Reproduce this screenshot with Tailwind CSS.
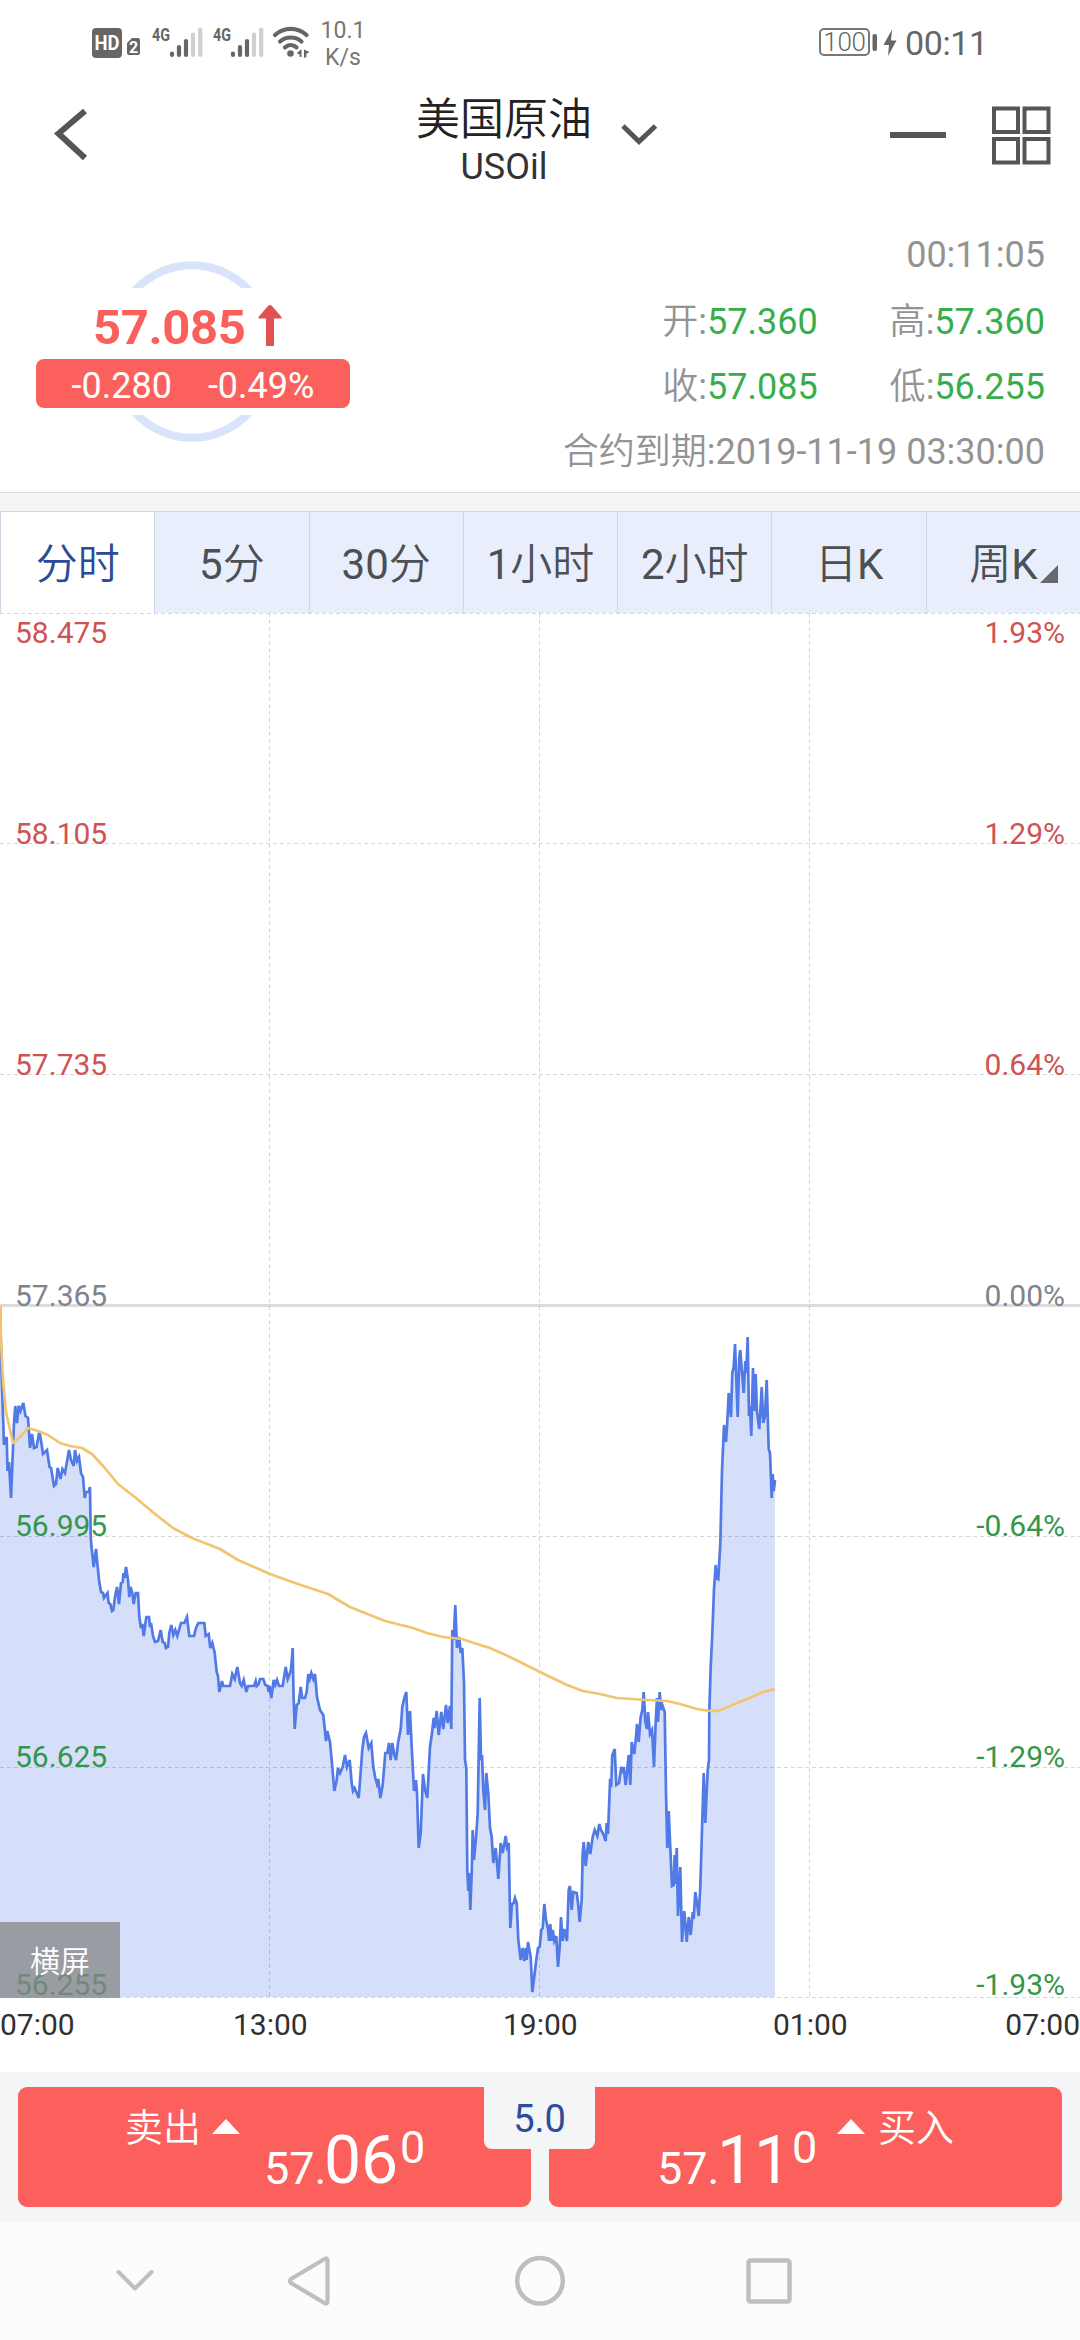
<!DOCTYPE html>
<html lang="zh-CN">
<head>
<meta charset="utf-8">
<title>美国原油 USOil</title>
<script src="https://cdn.jsdelivr.net/npm/@tailwindcss/browser@4"></script>
</head>
<body class="w-[1080px] h-[2340px] overflow-hidden bg-white font-[Roboto,'Noto_Sans_CJK_SC',sans-serif] flex flex-col">

<!-- Status bar -->
<header class="h-[84px] shrink-0 flex justify-between pl-[92px] pr-[94px] text-[#666]">
  <div class="flex">
    <svg class="w-[220px] h-[84px]" viewBox="92 0 220 84" fill="#666">
      <rect x="92" y="28" width="30" height="30" rx="4"/>
      <text x="107" y="50" text-anchor="middle" font-size="19.5" font-weight="700" fill="#fff" textLength="25" lengthAdjust="spacingAndGlyphs">HD</text>
      <path d="M132 38h6a2 2 0 0 1 2 2v13a2 2 0 0 1-2 2h-9a2 2 0 0 1-2-2V43z"/>
      <text x="133.5" y="53" text-anchor="middle" font-size="16" font-weight="700" fill="#fff">2</text>
      <g id="sig">
        <text x="152" y="40.500" font-size="19" font-weight="700" textLength="18" lengthAdjust="spacingAndGlyphs">4G</text>
        <g stroke-width="4.2" stroke-linecap="round" stroke="#666">
          <path d="M172 53.500v1.500M179 47v8M186 41v14"/>
          <path stroke="#d0d0d0" d="M193 34.500v20.500M200.200 29.500v25.500"/>
        </g>
      </g>
      <use href="#sig" x="61"/>
      <g fill="none" stroke="#666" stroke-width="4.200" stroke-linecap="round">
        <path d="M275 35a23.500 23.500 0 0 1 31.500 0M280 41.500a16.500 16.500 0 0 1 21.500 0M285 47.300a9 9 0 0 1 11.500 0"/>
      </g>
      <circle cx="290.500" cy="53.500" r="3.300"/>
      <path d="M301.500 49v8h-1.800v-2.500l-3-1.300zM304 49.500l5.500 2.500-3.200 2v3.500H304z"/>
    </svg>
    <div class="w-[62px] text-center text-[23px] leading-[27px] pt-[17px] text-[#777]"><div>10.1</div><div>K/s</div></div>
  </div>
  <div class="flex items-center">
    <div class="w-[51px] h-[28px] border-2 border-[#777] rounded-[5px] text-[26px] leading-[25px] font-[350] text-center tracking-[-0.3px]">100</div>
    <svg class="w-[34px] h-[30px]" viewBox="870 27 34 30" fill="#666"><rect x="872.500" y="34" width="4.500" height="17" rx="2"/><path d="M892 29.500l-8.500 15.500h5.500l-1 11 8.500-15.500h-5.500z"/></svg>
    <div class="text-[34px] leading-[40px] pt-[2px] tracking-[-0.4px] w-[82px] pl-[1px]">00:11</div>
  </div>
</header>

<!-- Title bar -->
<nav class="h-[126px] shrink-0 flex text-[#222]">
  <svg class="w-[380px] h-[100px]" viewBox="0 84 380 100"><path d="M85 112L58.500 134.500 85 159" fill="none" stroke="#555" stroke-width="6" transform="translate(0 -1)"/></svg>
  <div class="w-[248px] text-center flex flex-col items-center">
    <div class="text-[44px] leading-[72px] h-[62px] font-[350]">美国原油</div>
    <div class="text-[36px] leading-[42px] text-[#333]">USOil</div>
  </div>
  <svg class="w-[452px] h-[100px]" viewBox="628 84 452 100" overflow="visible" fill="none" stroke="#555">
    <path d="M623 126l16 15.500L655.500 126" stroke-width="5"/>
    <path d="M890 135h56" stroke-width="6"/>
    <path d="M994 108.500h24v23.500h-24zM1024.500 108.500h24v23.500h-24zM994 139h24v23.500h-24zM1024.500 139h24v23.500h-24z" stroke-width="4"/>
  </svg>
</nav>

<!-- Quote summary -->
<section class="h-[283px] shrink-0 flex justify-between border-b border-[#d9dcd6]">
  <div class="relative w-[350px] pl-9 pt-[78px]">
    <svg class="absolute left-[92px] top-[41px] w-[200px] h-[200px]" viewBox="92 251 200 200" fill="none" stroke="#d9e3fb" stroke-width="8">
      <clipPath id="caps"><path d="M92 251h200v37H92zM92 415h200v36H92z"/></clipPath>
      <ellipse cx="192" cy="351.500" rx="81" ry="86.300" clip-path="url(#caps)"/>
    </svg>
    <div class="relative h-[71px] flex items-center pl-[57px] text-[#f9605c]">
      <span class="text-[49px] leading-[71px] font-bold pt-[7px] w-[154px] tracking-[-0.4px]">57.085</span>
      <svg class="w-[24px] h-[41px] ml-[11px] mt-1" viewBox="0 0 24 41" fill="#e05252"><path d="M12 0q1 0 2 1l9.500 11q.8 1.500-1 1.500H16V41H8V13.500H1.500q-1.800 0-1-1.500L10 1q1-1 2-1z"/></svg>
    </div>
    <div class="relative h-[49px] rounded-lg bg-[#fc605c] text-white text-[36px] leading-[54px] flex justify-center gap-9"><span>-0.280</span><span>-0.49%</span></div>
  </div>
  <div class="pr-[35px] pt-[23px] text-right text-[36px] leading-[44px] text-[#939393] font-[350]">
    <div class="h-[67px] font-normal">00:11:05</div>
    <div class="h-[65px] flex justify-end gap-[72px]"><div>开<b class="font-normal">:</b><b class="font-normal text-[#38ad4c]">57.360</b></div><div>高<b class="font-normal">:</b><b class="font-normal text-[#38ad4c]">57.360</b></div></div>
    <div class="h-[65px] flex justify-end gap-[72px]"><div>收<b class="font-normal">:</b><b class="font-normal text-[#38ad4c]">57.085</b></div><div>低<b class="font-normal">:</b><b class="font-normal text-[#38ad4c]">56.255</b></div></div>
    <div>合约到期<span class="font-normal">:2019-11-19 03:30:00</span></div>
  </div>
</section>
<div class="h-[18px] shrink-0 bg-[#f3f5f6]"></div>

<!-- Period tabs -->
<div class="h-[102px] shrink-0 grid grid-cols-7 border-t border-[#cfd9e6] bg-[#e9eefc] text-[42px] leading-[106px] text-center text-[#4c4f54]">
  <div class="bg-white text-[#2a4b98] border-l border-[#cfd9e6] font-[350] h-[101px]">分时</div>
  <div class="border-l border-[#cfd9e6] h-[101px]">5<span class="font-[350]">分</span></div>
  <div class="border-l border-[#cfd9e6] h-[101px]">30<span class="font-[350]">分</span></div>
  <div class="border-l border-[#cfd9e6] h-[101px]">1<span class="font-[350]">小时</span></div>
  <div class="border-l border-[#cfd9e6] h-[101px]">2<span class="font-[350]">小时</span></div>
  <div class="border-l border-[#cfd9e6] h-[101px]"><span class="font-[350]">日</span>K</div>
  <div class="border-l border-[#cfd9e6] h-[101px] flex justify-center pl-[20px]"><span class="font-[350]">周</span>K<svg class="w-[18px] h-[18px] mt-[53px] ml-[2px]" viewBox="0 0 18 18" fill="#66686c"><path d="M18 0v18H0z"/></svg></div>
</div>

<!-- Intraday chart -->
<section class="relative h-[1385px] shrink-0">
  <svg class="w-[1080px] h-[1385px]" viewBox="0 613 1080 1385">
    <path fill="none" stroke="#dcdcdf" stroke-width="3" d="M0 1305.500H1080"/>
    <path id="area" fill="#d6dffa"/>
    <g fill="none" stroke="#000" stroke-opacity=".16" stroke-width="1" stroke-dasharray="4 3">
      <path d="M0 613.500H1080M0 843.500H1080M0 1074.500H1080M0 1536.500H1080M0 1767.500H1080M0 1997.500H1080M269.500 613V1997M539.500 613V1997M809.500 613V1997"/>
    </g>
    <path id="line" fill="none" stroke="#527ae6" stroke-width="2.700"/>
    <path id="avg" fill="none" stroke="#f3c470" stroke-width="2.700" stroke-linejoin="round"/>
    <g font-size="30">
      <g fill="#cf5353"><text x="15" y="643">58.475</text><text x="15" y="844">58.105</text><text x="15" y="1075">57.735</text></g>
      <text x="15" y="1306" fill="#80838c">57.365</text>
      <g fill="#35964b"><text x="15" y="1536">56.995</text><text x="15" y="1767">56.625</text><text x="15" y="1995">56.255</text></g>
      <g text-anchor="end">
        <g fill="#cf5353"><text x="1065" y="643">1.93%</text><text x="1065" y="844">1.29%</text><text x="1065" y="1075">0.64%</text></g>
        <text x="1065" y="1306" fill="#80838c">0.00%</text>
        <g fill="#35964b"><text x="1065" y="1536">-0.64%</text><text x="1065" y="1767">-1.29%</text><text x="1065" y="1995">-1.93%</text></g>
      </g>
    </g>
  </svg>
  <div class="absolute left-0 bottom-0 w-[120px] h-[76px] bg-[#858585]/75 text-white text-[30px] leading-[80px] text-center font-[350]">横屏</div>
</section>
<div class="relative h-[74px] shrink-0 grid grid-cols-4 text-[30px] leading-[54px] text-[#303030]">
  <span>07:00</span><span class="-ml-[37px]">13:00</span><span class="-ml-[37px]">19:00</span><span class="-ml-[37px] flex justify-between"><span>01:00</span><span>07:00</span></span>
</div>

<!-- Trade bar -->
<section class="relative h-[150px] shrink-0 bg-[#f4f5f6] px-[18px] pt-[15px] flex gap-[18px] text-white">
  <div class="w-[513px] h-[120px] rounded-[9px] bg-[#fc605c] flex pl-[107px]">
    <span class="text-[38px] leading-[44px] pt-[19px] font-[350] w-[87px]">卖出</span>
    <svg class="w-[28px] h-[15px] mt-[32px] mr-[24px]" viewBox="0 0 28 15" fill="#fff"><path d="M14 0l14 15H0z"/></svg>
    <span class="text-[45px] leading-[53px] pt-[55px] w-[60px]">57.</span>
    <span class="text-[66px] leading-[76px] pt-[36px] w-[76px]">06</span>
    <span class="text-[45px] leading-[53px] pt-[34px]">0</span>
  </div>
  <div class="w-[513px] h-[120px] rounded-[9px] bg-[#fc605c] flex pl-[108px]">
    <span class="text-[45px] leading-[53px] pt-[55px] w-[60px]">57.</span>
    <span class="text-[66px] leading-[76px] pt-[36px] w-[75px]">11</span>
    <span class="text-[45px] leading-[53px] pt-[34px] w-[45px]">0</span>
    <svg class="w-[28px] h-[15px] mt-[32px] mr-[13px]" viewBox="0 0 28 15" fill="#fff"><path d="M14 0l14 15H0z"/></svg>
    <span class="text-[38px] leading-[44px] pt-[19px] font-[350]">买入</span>
  </div>
  <div class="absolute left-[484px] top-[15px] w-[111px] h-[62px] rounded-b-lg bg-[#f4f5f6] text-[#2f4c9a] text-[38px] leading-[64px] text-center">5.0</div>
</section>

<!-- System navigation -->
<footer class="h-[118px] shrink-0 bg-[#fcfcfc]">
  <svg class="w-[1080px] h-[118px]" viewBox="0 2222 1080 118" fill="none" stroke="#bfbfbf" stroke-width="4.500" stroke-linejoin="round" stroke-linecap="round">
    <path d="M118.500 2272L135 2288.500 151.500 2272" stroke-width="4"/>
    <path d="M327.500 2260.500v41q0 3-3 1.500L291 2283q-2-2 0-4L324.500 2259q3-1.500 3 1.500z" stroke-width="4.200"/>
    <circle cx="540" cy="2280.800" r="22.800"/>
    <rect x="748.500" y="2260.500" width="41" height="41" rx="2"/>
  </svg>
</footer>

<script>
const price = `0,1306 1.7,1377 4,1445 5,1437 6,1443 6.700,1437 7.500,1471 9,1462 11,1498 12,1473 14,1423 15.300,1406 17,1423 18.700,1406 20.500,1411 23.300,1403 25.500,1416 28,1418 30,1448 32,1434 34,1448 36.500,1447 39.500,1431 43,1454 47,1450 49.500,1467 51,1468 54,1486 56,1484 57.700,1468 60.500,1479 62.500,1469 65,1473 69,1450 71,1460 73.700,1466 75,1450 77,1461 79,1457 81,1473 83,1477 84.700,1498 86,1492 88.700,1492 90,1487 90.700,1537 91.500,1547 93.700,1567 96,1549 97.700,1567 99,1580 101,1592 103,1593 104,1598 107.500,1593 108.700,1603 110.300,1604 112,1611 113.300,1610 115,1597 117,1587 119,1604 121,1583 122.700,1582 123.500,1573 124.700,1578 126,1567 128,1580 129.300,1597 130.500,1587 132.300,1593 133.700,1604 135.700,1593 138,1593 139.300,1617 141,1628 142.300,1624 143.700,1636 146.300,1617 149,1617 150,1627 151,1623 153,1636 155,1642 158,1641 160.700,1630 162.700,1642 164.700,1643 166,1648 168,1647 169.300,1633 171.300,1625 173.300,1635 175.300,1630 177.300,1636 181,1623 184.300,1623 187,1617 189.300,1636 194,1636 196,1628 198.300,1623 204.300,1623 205.700,1636 208.700,1634 210.300,1648 212.300,1643 214.700,1653 216.700,1672 218,1676 219.300,1692 222,1681 223.300,1686 230,1686 232.300,1674 234.700,1679 237.300,1667 240,1683 241.700,1686 243.700,1680 246.300,1692 248,1686 254,1686 255.700,1681 256.700,1686 258.700,1684 260,1679 263.300,1679 265.300,1685 267.700,1686 268.700,1692 269.700,1686 271.300,1698 273.700,1680 275.300,1685 277,1680 279,1686 282.700,1686 285.700,1667 287.700,1679 289.300,1675 291,1670 292.700,1648 293.500,1693 294.700,1729 296.700,1705 298.700,1703 300.700,1687 302.300,1698 305,1698 306.700,1692 308.300,1674 309.700,1679 311.300,1673 313.300,1679 315,1674 317,1697 320,1710 323.300,1715 326,1741 327.300,1731 330,1742 332.300,1767 334.300,1791 336.700,1780 338,1768 340,1773 342.700,1767 345,1755 347,1767 349.700,1760 351.700,1783 353,1791 354.700,1788 356.700,1793 358.700,1798 360.300,1777 362.300,1750 364,1737 366,1733 368.700,1748 371.300,1743 373.300,1767 375.300,1778 377,1784 378.300,1779 380.300,1798 382.700,1785 385.300,1753 387.300,1753 389,1743 390.700,1760 392.300,1743 394.300,1755 396,1760 398,1743 400.700,1729 402.300,1707 404.300,1698 406.300,1692 408,1735 410,1711 411.700,1747 414,1791 416,1780 417,1793 418.700,1848 420.700,1833 423,1774 425,1790 427.300,1798 430,1747 432,1733 433.700,1718 434.700,1728 436.700,1711 438.700,1735 441.300,1712 443.300,1729 446,1705 447.700,1723 450,1706 451.300,1729 452.300,1630 453.700,1640 455.300,1605 457,1648 459.300,1637 460.700,1653 462.300,1648 464,1683 465,1760 466.300,1768 467.300,1870 468.300,1891 469.300,1873 470.300,1910 471.700,1873 472.700,1830 474,1860 476,1838 477.700,1813 479.700,1698 481,1760 482,1755 483.300,1790 485,1810 486.300,1773 488.300,1793 490,1828 491.700,1837 493.300,1863 495.700,1848 498.300,1879 500.700,1843 502.700,1853 505.700,1836 507,1847 508.700,1843 510.300,1928 512,1904 513.700,1903 515,1898 516.700,1903 518.300,1940 520.700,1960 522.700,1948 524.300,1961 526,1948 526.700,1960 528,1942 530.700,1957 532.300,1992 534.700,1973 536,1962 538,1948 539.700,1947 541.300,1930 542.700,1928 544.300,1904 546,1920 548,1929 549,1941 550.300,1924 551.700,1941 552.700,1930 554.300,1941 556.300,1936 558,1967 559.700,1947 561,1917 562.700,1941 564.300,1929 567,1941 568.700,1890 570,1886 571.700,1910 573.300,1892 576.700,1893 578,1903 579.700,1922 581.700,1900 582.700,1853 583.700,1842 585.700,1866 588.300,1842 590.300,1854 592.700,1837 594.700,1830 597.300,1836 599.300,1824 601,1830 603.300,1834 605.700,1841 606.700,1823 608,1834 610,1782 611.300,1784 612.300,1755 614.700,1749 616.300,1785 619,1783 621.300,1767 623.300,1773 623.700,1767 625.700,1785 628.700,1755 630.300,1785 631.700,1742 634.300,1754 636,1737 637,1724 638.700,1742 640.700,1717 642.300,1710 643.700,1692 645.300,1722 647,1729 648,1712 650,1734 652,1730 654,1767 655.700,1722 657,1698 658,1722 659.700,1692 661,1710 662.300,1705 664.700,1712 666,1793 667.300,1848 668.700,1811 670.700,1857 672,1886 673.700,1885 674.700,1855 675.700,1884 676.700,1848 678,1916 680.300,1867 682,1942 684.300,1911 686.700,1942 688.700,1917 690.700,1935 692.700,1912 693.700,1919 695.300,1892 697.300,1905 698.700,1916 700.300,1887 702,1830 703.700,1773 705.300,1823 707.700,1770 709,1760 709.300,1712 710.700,1667 712.300,1634 714,1589 715.700,1565 717,1578 718.300,1579 720.300,1544 722,1471 724,1425 726,1442 727.300,1422 728.700,1393 731,1417 732.300,1373 733.700,1367 735,1344 737.700,1417 739.300,1357 740.300,1350 741.700,1369 743.700,1393 745.300,1361 746.300,1373 747.700,1337 749,1416 750,1406 751.300,1436 753,1368 754.300,1411 755.700,1374 757,1412 759.300,1429 761.700,1387 763.300,1423 765,1416 766.700,1380 768.700,1449 770,1453 771.700,1498 772.700,1474 773.700,1491 775,1480`;
const average = `0,1306 1,1340 3,1380 6,1412 13,1443 20,1437 28,1428 38,1431 48,1435 60,1443 70,1446 82,1448 92,1454 104,1467 118,1484 136,1498 155,1514 173,1528 192,1538 210,1545 220,1549 238,1560 270,1574 295,1583 328,1594 350,1607 385,1621 413,1628 427,1633 443,1637 462,1639 477,1644 490,1648 510,1657 540,1672 567,1685 583,1691 600,1694 617,1698 647,1700 667,1701 680,1704 697,1709 710,1711 718,1711 730,1706 747,1699 763,1692 775,1689`;
document.getElementById('line').setAttribute('d', 'M' + price);
document.getElementById('area').setAttribute('d', 'M' + price + ' V1997 H0Z');
document.getElementById('avg').setAttribute('d', 'M' + average);
</script>
</body>
</html>
